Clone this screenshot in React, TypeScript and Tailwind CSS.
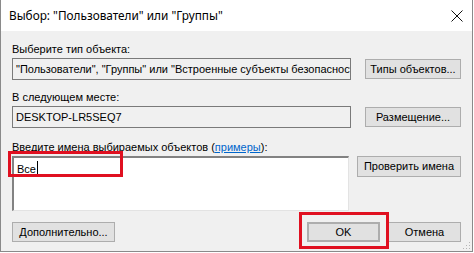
import React from "react";

const font = { fontFamily: '"Liberation Sans", Arial, sans-serif' };

function Btn({ children, className = "" }: { children: React.ReactNode; className?: string }) {
  return (
    <div
      className={
        "flex items-center justify-center h-[20px] bg-[#e1e1e1] border border-[#adadad] text-[11px] text-black " +
        className
      }
    >
      {children}
    </div>
  );
}

export default function App() {
  return (
    <div className="w-[474px] h-[253px] bg-white" style={font}>
      <div className="w-[473px] h-[252px] border border-[#8a8a8a] border-t-0 flex flex-col bg-[#f0f0f0] relative">
        {/* title bar */}
        <div className="h-[31px] bg-white flex items-center justify-between pl-[8px] pr-[9px]">
          <span className="text-[11.8px] text-black" style={{ fontFamily: '"Noto Sans", sans-serif' }}>
            Выбор: "Пользователи" или "Группы"
          </span>
          <svg width="12" height="12" viewBox="0 0 12 12">
            <path d="M0.5 0.5 L11.5 11.5 M11.5 0.5 L0.5 11.5" stroke="#111" strokeWidth="1" />
          </svg>
        </div>

        <div className="flex flex-col pl-[11px] pr-[11px] text-[11px]">
          <div className="mt-[12px] leading-[13px] text-black">Выберите тип объекта:</div>
          <div className="mt-[2px] flex items-center">
            <div className="w-[339px] h-[22px] shrink-0 bg-[#f0f0f0] border border-[#7a7a7a] flex items-center px-[3px] overflow-hidden whitespace-nowrap text-black">
              "Пользователи", "Группы" или "Встроенные субъекты безопасности"
            </div>
            <Btn className="ml-auto w-[96px]">Типы объектов...</Btn>
          </div>

          <div className="mt-[11px] leading-[13px] text-black">В следующем месте:</div>
          <div className="mt-[2px] flex items-center">
            <div className="w-[339px] h-[22px] shrink-0 bg-[#f0f0f0] border border-[#7a7a7a] flex items-center px-[3px] text-black">
              DESKTOP-LR5SEQ7
            </div>
            <Btn className="ml-auto w-[96px]">Размещение...</Btn>
          </div>

          <div className="mt-[13px] leading-[13px] text-black">
            Введите имена выбираемых объектов (
            <span className="text-[#0066cc] underline">примеры</span>):
          </div>
          <div className="mt-[2px] flex items-start">
            <div className="w-[337px] h-[55px] shrink-0 bg-white border-t-2 border-l-2 border-[#828282] border-b border-r border-b-[#e3e3e3] border-r-[#e3e3e3] px-[3px] pt-[3px] text-black flex items-start">
              <span>Все</span>
              <span className="inline-block w-px h-[14px] bg-black ml-px" />
            </div>
            <Btn className="ml-auto w-[104px] h-[21px]">Проверить имена</Btn>
          </div>

          <div className="mt-[11px] flex items-center">
            <Btn className="w-[103px]">Дополнительно...</Btn>
            <Btn className="ml-auto w-[73px] border-2 border-[#0078d7]">OK</Btn>
            <Btn className="ml-[8px] w-[73px]">Отмена</Btn>
          </div>
        </div>

        {/* size grip */}
        <svg className="absolute right-[1px] bottom-[1px]" width="8" height="8" viewBox="0 0 8 8">
          <rect x="6" y="0" width="1" height="1" fill="#b5b5b5" />
          <rect x="3" y="3" width="1" height="1" fill="#b5b5b5" />
          <rect x="6" y="3" width="1" height="1" fill="#b5b5b5" />
          <rect x="0" y="6" width="1" height="1" fill="#b5b5b5" />
          <rect x="3" y="6" width="1" height="1" fill="#b5b5b5" />
          <rect x="6" y="6" width="1" height="1" fill="#b5b5b5" />
        </svg>

        {/* annotation frames */}
        <div className="absolute left-[7px] top-[151px] w-[115px] h-[26px] border-[3px] border-[#e01020]" />
        <div className="absolute left-[298px] top-[212px] w-[90px] h-[37px] border-[3px] border-[#e01020]" />
      </div>
    </div>
  );
}
